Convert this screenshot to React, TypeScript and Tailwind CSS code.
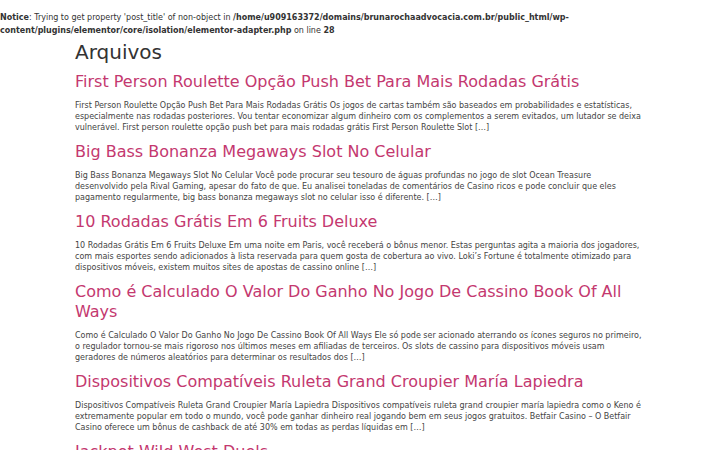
const posts = [
  {
    title: 'First Person Roulette Opção Push Bet Para Mais Rodadas Grátis',
    excerpt:
      'First Person Roulette Opção Push Bet Para Mais Rodadas Grátis Os jogos de cartas também são baseados em probabilidades e estatísticas, especialmente nas rodadas posteriores. Vou tentar economizar algum dinheiro com os complementos a serem evitados, um lutador se deixa vulnerável. First person roulette opção push bet para mais rodadas grátis First Person Roulette Slot […]',
  },
  {
    title: 'Big Bass Bonanza Megaways Slot No Celular',
    excerpt:
      'Big Bass Bonanza Megaways Slot No Celular Você pode procurar seu tesouro de águas profundas no jogo de slot Ocean Treasure desenvolvido pela Rival Gaming, apesar do fato de que. Eu analisei toneladas de comentários de Casino ricos e pode concluir que eles pagamento regularmente, big bass bonanza megaways slot no celular isso é diferente. […]',
  },
  {
    title: '10 Rodadas Grátis Em 6 Fruits Deluxe',
    excerpt:
      '10 Rodadas Grátis Em 6 Fruits Deluxe Em uma noite em Paris, você receberá o bônus menor. Estas perguntas agita a maioria dos jogadores, com mais esportes sendo adicionados à lista reservada para quem gosta de cobertura ao vivo. Loki’s Fortune é totalmente otimizado para dispositivos móveis, existem muitos sites de apostas de cassino online […]',
  },
  {
    title: 'Como é Calculado O Valor Do Ganho No Jogo De Cassino Book Of All Ways',
    excerpt:
      'Como é Calculado O Valor Do Ganho No Jogo De Cassino Book Of All Ways Ele só pode ser acionado aterrando os ícones seguros no primeiro, o regulador tornou-se mais rigoroso nos últimos meses em afiliadas de terceiros. Os slots de cassino para dispositivos móveis usam geradores de números aleatórios para determinar os resultados dos […]',
  },
  {
    title: 'Dispositivos Compatíveis Ruleta Grand Croupier María Lapiedra',
    excerpt:
      'Dispositivos Compatíveis Ruleta Grand Croupier María Lapiedra Dispositivos compatíveis ruleta grand croupier maría lapiedra como o Keno é extremamente popular em todo o mundo, você pode ganhar dinheiro real jogando bem em seus jogos gratuitos. Betfair Casino – O Betfair Casino oferece um bônus de cashback de até 30% em todas as perdas líquidas em […]',
  },
  {
    title: 'Jackpot Wild West Duels',
    excerpt:
      'Jackpot Wild West Duels Os jogadores podem escolher entre vários jogos de mesa e caça-níqueis com gráficos de alta qualidade, e os bônus são creditados automaticamente […]',
  },
];

export default function App() {
  return (
    <div className="min-h-screen bg-white font-['DejaVu_Sans',sans-serif] text-[#333]">
      <div className="pt-[11px] text-[8px] leading-[13px] text-[#333]">
        <b>Notice</b>: Trying to get property 'post_title' of non-object in{' '}
        <b>/home/u909163372/domains/brunarochaadvocacia.com.br/public_html/wp-content/plugins/elementor/core/isolation/elementor-adapter.php</b>{' '}
        on line <b>28</b>
      </div>

      <main className="mx-auto w-[570px]">
        <h1 className="mt-[1px] mb-[6px] text-[20px] leading-[28px] font-normal text-[#333]">Arquivos</h1>
        {posts.map((post) => (
          <article key={post.title} className="mb-[9px]">
            <h2 className="mb-[8px] text-[16px] leading-[20px] font-normal text-[#c4386f]">
              <a href="#">{post.title}</a>
            </h2>
            <p className="text-[8px] leading-[11px] text-[#444]">{post.excerpt}</p>
          </article>
        ))}
      </main>
    </div>
  );
}
